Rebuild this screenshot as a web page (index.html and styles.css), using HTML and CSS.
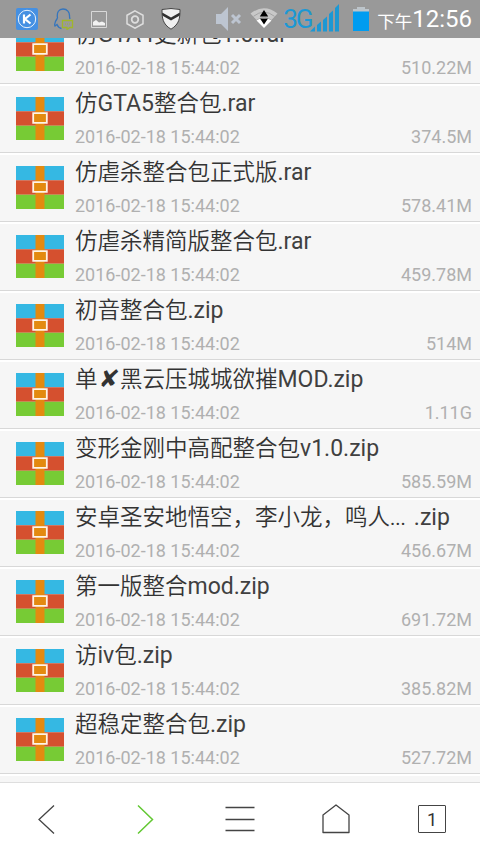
FILE: index.html
```html
<!DOCTYPE html>
<html lang="zh-CN">
<head>
<meta charset="utf-8">
<title>文件</title>
<link rel="stylesheet" href="styles.css">
</head>
<body>
<svg class="defs" width="0" height="0">
  <symbol id="archive" viewBox="0 0 48 43">
    <path fill="#35b8e3" d="M0 0h48v14.3H0z"/>
    <path fill="#d5502f" d="M0 14.3h48v14.5H0z"/>
    <path fill="#77cb35" d="M0 28.8h48V43H0z"/>
    <path fill="#e38a10" d="M19.5 0h9v43h-9z"/>
    <path fill="#e38a10" stroke="#fff3e6" stroke-width="1.8" d="M17.2 16.1h13.6v9.8H17.2z"/>
  </symbol>
</svg>
<div class="screen">
  <header class="status">
    <div class="notices">
      <svg width="22" height="22" viewBox="0 0 22 22"><rect width="22" height="22" rx="2" fill="#4590e2"/><circle cx="11" cy="11" r="8.7" fill="none" stroke="#e8f2fc" stroke-width="1"/><path d="M8 6.500v9M14.500 6.500L9 11l5.500 4.500" fill="none" stroke="#fff" stroke-width="2.200"/></svg>
      <svg width="20" height="22" viewBox="0 0 20 22"><path d="M3.500 10C1 13.500 0 16 1 18l2-1.500C4 19 5 20 7.500 20.500M3.500 10C2.500 4 5 1 9 1s7 3 6.500 8l.5 2" fill="none" stroke="#3575bd" stroke-width="1.300"/><path d="M8.500 12.500h10v7H16l-3 2v-2H8.500z" fill="none" stroke="#a0b62a" stroke-width="1.300"/><path d="M11 16h1m1 0h1m1 0h1" stroke="#a0b62a"/></svg>
      <svg width="16" height="17" viewBox="0 0 16 17"><path d="M.5.5h15v16H.5z" fill="none" stroke="#d8d8d8"/><path d="M2 14.500V11l3-2 3 2.500 3-1 3 1.500v2.500z" fill="#f2f2f2"/></svg>
      <svg width="18" height="19" viewBox="0 0 18 19"><path d="M9 .8l8 4.500v8.400l-8 4.500-8-4.500V5.300z" fill="none" stroke="#dedede" stroke-width="1.500"/><circle cx="9" cy="9.500" r="3.300" fill="none" stroke="#dedede" stroke-width="1.800"/></svg>
      <svg width="20" height="22" viewBox="0 0 20 22"><path d="M1 1.500Q10-.5 19 1.500C19 10 18.500 16 10 21.200 1.500 16 1 10 1 1.500z" fill="#f0f0f0" stroke="#444" stroke-width="1"/><path d="M1.200 4.500L10 9.500l8.800-5v3L10 12.500 1.200 7.500z" fill="#303030"/></svg>
    </div>
    <div class="system">
      <svg class="mute" width="28" height="24" viewBox="0 0 28 24"><path d="M1 7h5l7-7v24l-7-7H1z" fill="#bdc5d1"/><path d="M17 8l8 8m0-8l-8 8" stroke="#bdc5d1" stroke-width="3"/></svg>
      <svg class="wifi" width="30" height="22" viewBox="0 0 30 22"><path d="M1.500 6.500Q15-4 28.500 6.500L22.500 13Q15 7 7.500 13z" fill="#c8c8c8"/><path d="M4.500 9.300Q15 1 25.500 9.300" fill="none" stroke="#a4a4a4"/><path d="M7.500 13.500Q15 8 22.500 13.500L15 21z" fill="#fff"/><path d="M15 3l4.200 6.500h-8.400zM11 11.500h8L15 17.500z" fill="#000"/></svg>
      <span class="network">3G</span>
      <svg class="signal" width="30" height="28" viewBox="0 0 30 28"><path fill="#1c98d4" d="M0 27.500l5-5v5zM7 21l4-3.500v10H7zM13 16l4-3.500v15h-4zM19 10l4-3.500v21h-4zM25 4l4-4v27.500h-4z"/></svg>
      <svg class="battery" width="16" height="24" viewBox="0 0 16 24"><path fill="#bcc4ca" d="M4 0h8v2h4v3H0V2h4z"/><path fill="#009cf0" d="M0 4.500h16V24H0z"/></svg>
      <span class="period">下午</span><span class="clock">12:56</span>
    </div>
  </header>
  <main class="viewport">
    <ul class="files">
      <li class="file"><svg class="thumb"><use href="#archive"/></svg><div class="info"><div class="name">仿<span class="latin">GTA4</span>更新包<span class="latin">1.0.rar</span></div><div class="meta"><span>2016-02-18 15:44:02</span><span>510.22M</span></div></div></li>
      <li class="file"><svg class="thumb"><use href="#archive"/></svg><div class="info"><div class="name">仿<span class="latin">GTA5</span>整合包<span class="latin">.rar</span></div><div class="meta"><span>2016-02-18 15:44:02</span><span>374.5M</span></div></div></li>
      <li class="file"><svg class="thumb"><use href="#archive"/></svg><div class="info"><div class="name">仿虐杀整合包正式版<span class="latin">.rar</span></div><div class="meta"><span>2016-02-18 15:44:02</span><span>578.41M</span></div></div></li>
      <li class="file"><svg class="thumb"><use href="#archive"/></svg><div class="info"><div class="name">仿虐杀精简版整合包<span class="latin">.rar</span></div><div class="meta"><span>2016-02-18 15:44:02</span><span>459.78M</span></div></div></li>
      <li class="file"><svg class="thumb"><use href="#archive"/></svg><div class="info"><div class="name">初音整合包<span class="latin">.zip</span></div><div class="meta"><span>2016-02-18 15:44:02</span><span>514M</span></div></div></li>
      <li class="file"><svg class="thumb"><use href="#archive"/></svg><div class="info"><div class="name">单<span class="cross">✘</span>黑云压城城欲摧<span class="latin">MOD.zip</span></div><div class="meta"><span>2016-02-18 15:44:02</span><span>1.11G</span></div></div></li>
      <li class="file"><svg class="thumb"><use href="#archive"/></svg><div class="info"><div class="name">变形金刚中高配整合包<span class="latin">v1.0.zip</span></div><div class="meta"><span>2016-02-18 15:44:02</span><span>585.59M</span></div></div></li>
      <li class="file"><svg class="thumb"><use href="#archive"/></svg><div class="info"><div class="name">安卓圣安地悟空，李小龙，鸣人<span class="dots">...</span><span class="latin extension">.zip</span></div><div class="meta"><span>2016-02-18 15:44:02</span><span>456.67M</span></div></div></li>
      <li class="file"><svg class="thumb"><use href="#archive"/></svg><div class="info"><div class="name">第一版整合<span class="latin">mod.zip</span></div><div class="meta"><span>2016-02-18 15:44:02</span><span>691.72M</span></div></div></li>
      <li class="file"><svg class="thumb"><use href="#archive"/></svg><div class="info"><div class="name">访<span class="latin">iv</span>包<span class="latin">.zip</span></div><div class="meta"><span>2016-02-18 15:44:02</span><span>385.82M</span></div></div></li>
      <li class="file"><svg class="thumb"><use href="#archive"/></svg><div class="info"><div class="name">超稳定整合包<span class="latin">.zip</span></div><div class="meta"><span>2016-02-18 15:44:02</span><span>527.72M</span></div></div></li>
      <li class="file"></li>
    </ul>
  </main>
  <nav class="toolbar">
    <div class="tool"><svg width="32" height="32" viewBox="0 0 32 32"><path d="M22 2.500L7 16.500l15 14"/></svg></div>
    <div class="tool forward"><svg width="32" height="32" viewBox="0 0 32 32"><path d="M10 2.500l14.500 14L10 30.500"/></svg></div>
    <div class="tool"><svg width="32" height="32" viewBox="0 0 32 32"><path d="M1.500 4.500h29M1.500 16.500h29M1.500 27.500h29"/></svg></div>
    <div class="tool"><svg width="32" height="32" viewBox="0 0 32 32"><path d="M3 12L16 2l13 10v17.500H3z" stroke-linejoin="round"/></svg></div>
    <div class="tool"><span class="tabs">1</span></div>
  </nav>
</div>
</body>
</html>
```
FILE: styles.css
```css
* { box-sizing: border-box; }
body { margin: 0; font-family: Roboto, "Noto Sans CJK SC", sans-serif; }
.defs { display: block; }
.screen { width: 480px; height: 854px; display: flex; flex-direction: column; overflow: hidden; background: #fff; }
.status { flex: none; height: 38px; background: #999; display: flex; justify-content: space-between; color: #fff; }
.notices { display: flex; align-items: center; gap: 16px; padding-left: 16px; }
.notices svg:nth-child(3) { margin-left: 1px; }
.notices svg:nth-child(4) { margin-left: 3px; }
.notices svg:nth-child(5) { margin-left: 1px; }
.system { display: flex; align-items: center; padding-right: 8px; white-space: nowrap; }
.system svg { flex: none; }
.wifi { margin-left: 6px; margin-top: -2px; }
.network { width: 27px; margin-left: 4px; font-size: 26px; line-height: 36px; letter-spacing: -2px; color: #1c98d4; }
.signal { margin-top: -2px; }
.battery { margin-left: 13px; }
.period { margin: 5px 0 0 8px; font-size: 17.500px; line-height: 30px; }
.clock { font-size: 24px; line-height: 38px; }
.viewport { flex: 1; min-height: 0; overflow: hidden; background: #f6f6f6; }
.files { margin: -23px 0 0; padding: 0; list-style: none; }
.file { height: 69px; display: flex; border-top: 2px solid #fff; border-bottom: 1px solid #d8d8d8; padding: 0 8px 0 16px; background: #f6f6f6; }
.thumb { flex: none; width: 48px; height: 43px; margin-top: 11px; }
.info { flex: 1; margin-left: 11px; }
.name { height: 34px; line-height: 30px; font-family: "Noto Sans CJK SC", sans-serif; font-size: 22.500px; font-weight: 350; color: #333; white-space: nowrap; }
.latin { font-family: Roboto, sans-serif; font-size: 23px; font-weight: 400; line-height: 1; color: #404040; }
.meta { height: 32px; line-height: 34px; display: flex; justify-content: space-between; font-size: 18px; color: #b0b0b0; }
.cross { display: inline-block; width: 22.500px; font-family: "DejaVu Sans", sans-serif; font-size: 24px; font-weight: 400; line-height: 1; text-align: center; transform: skewX(-6deg); }
.dots { font-family: Roboto, sans-serif; font-size: 20px; font-weight: 400; line-height: 1; }
.extension { margin-left: 8px; }
.toolbar { flex: none; height: 72px; border-top: 1px solid #dedede; background: #fff; display: grid; grid-template-columns: 95px 97px repeat(3, 96px); }
.tool { display: flex; align-items: center; justify-content: center; }
.tool svg { fill: none; stroke: #444; stroke-width: 1.300; }
.forward svg { stroke: #62c832; stroke-width: 1.500; }
.tabs { width: 28px; height: 28px; border: 1px solid #444; border-radius: 1px; line-height: 28px; text-align: center; font-size: 18px; color: #333; }
```
